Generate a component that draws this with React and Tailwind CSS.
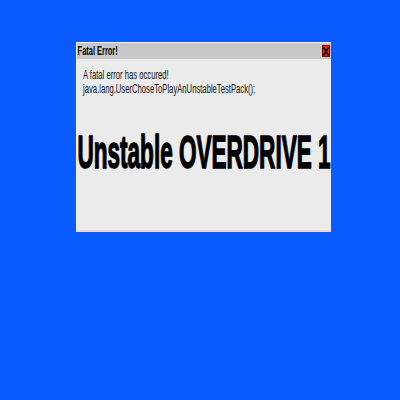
export default function App() {
  return (
    <div className="w-[400px] h-[400px] bg-[#0a5bff] pt-[42px] pl-[76px] overflow-hidden">
      <div className="w-[255px] h-[190px] bg-[#ebebeb] border-l border-t border-[#f4f4f4] border-b-2 border-b-[#e8dcc8] flex flex-col">
        <div className="h-[16px] bg-[#c8c8c8] flex items-center justify-between pr-[1px]">
          <span className="font-['Liberation_Sans',sans-serif] font-bold text-[12px] leading-none text-black whitespace-nowrap scale-x-[0.62] origin-left pl-[1px]">
            Fatal Error!
          </span>
          <div className="w-[8px] h-[12px] bg-[#ff2020] border border-[#800000] flex items-center justify-center">
            <svg width="6" height="9" viewBox="0 0 6 9">
              <path d="M0.5 0.5 L5.5 8.5 M5.5 0.5 L0.5 8.5" stroke="#000" strokeWidth="1.6" />
            </svg>
          </div>
        </div>
        <div className="pl-[6px] pt-[9px] font-['Liberation_Sans',sans-serif] text-[13px] leading-[14px] text-[#111]">
          <div className="whitespace-nowrap scale-x-[0.59] origin-left">A fatal error has occured!</div>
          <div className="whitespace-nowrap scale-x-[0.59] origin-left">java.lang.UserChoseToPlayAnUnstableTestPack();</div>
        </div>
        <div className="mt-[33px] pl-[1px] font-['Liberation_Sans',sans-serif] font-bold text-[46px] leading-none text-black whitespace-nowrap scale-x-[0.49] origin-left [-webkit-text-stroke:1.5px_black]">
          Unstable OVERDRIVE 1
        </div>
      </div>
    </div>
  )
}
